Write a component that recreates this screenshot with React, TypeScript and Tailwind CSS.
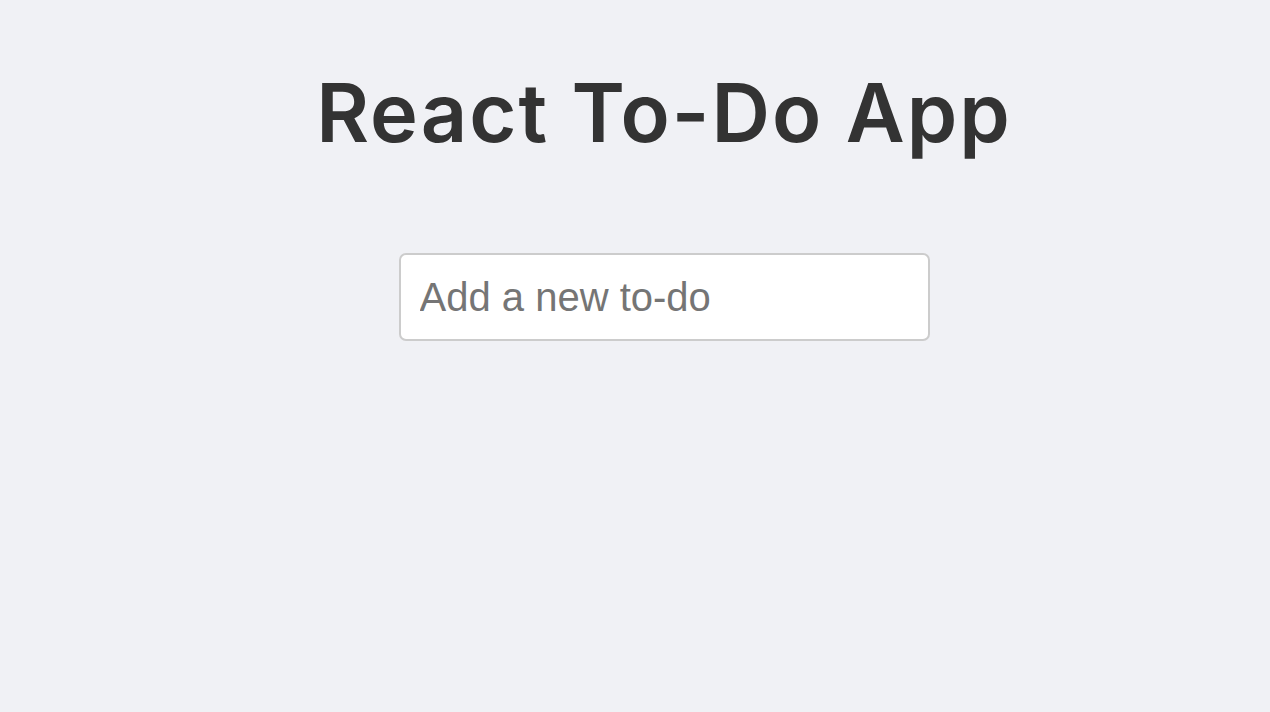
export default function App() {
  return (
    <div className="min-h-[712px] w-full bg-[#f0f1f5] pl-[58px]">
      <div className="flex flex-col items-center pt-[66px]">
        <h1 className="text-[81px] font-semibold leading-[94px] tracking-[2px] text-[#333333] font-['Inter',sans-serif]">
          React To-Do App
        </h1>
        <input
          type="text"
          placeholder="Add a new to-do"
          className="mt-[93px] h-[88px] w-[531px] rounded-[7px] border-2 border-[#cccccc] bg-white px-[19px] text-[40px] text-[#333333] placeholder:text-[#757575] outline-none font-['Liberation_Sans',Arial,sans-serif]"
        />
      </div>
    </div>
  );
}
